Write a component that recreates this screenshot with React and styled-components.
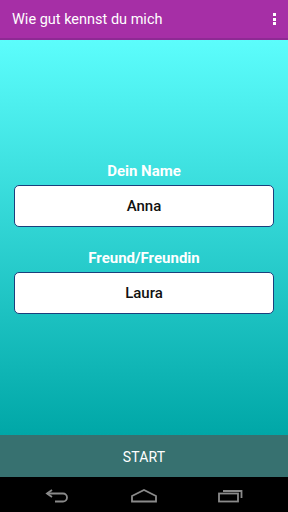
import styled, { createGlobalStyle } from 'styled-components';

const GlobalStyle = createGlobalStyle`
  html, body {
    margin: 0;
    padding: 0;
  }
  body {
    font-family: Roboto, "Noto Sans", sans-serif;
  }
`;

const Screen = styled.div`
  width: 288px;
  height: 512px;
  display: flex;
  flex-direction: column;
  overflow: hidden;
`;

const ActionBar = styled.header`
  height: 38px;
  flex-shrink: 0;
  background: #a62fa6;
  border-bottom: 2px solid #8e2a94;
  display: flex;
  align-items: center;
  justify-content: space-between;
  padding: 0 10px 0 12px;
`;

const Title = styled.h1`
  margin: 0;
  font-size: 14.5px;
  font-weight: 400;
  color: #ffffff;
`;

const MenuDots = styled.div`
  display: flex;
  flex-direction: column;
  gap: 1.5px;
  padding-right: 2px;

  span {
    width: 3px;
    height: 3px;
    background: #ffffff;
  }
`;

const Content = styled.main`
  flex: 1;
  background: linear-gradient(to bottom, #5cfdfc 0%, #00a7a7 100%);
  display: flex;
  flex-direction: column;
  padding: 122px 14px 0;
  gap: 22px;
`;

const Field = styled.div`
  display: flex;
  flex-direction: column;
  align-items: center;
  gap: 4px;
`;

const Label = styled.label`
  font-size: 15px;
  font-weight: 700;
  color: #ffffff;
  line-height: 19px;
`;

const InputBox = styled.input`
  box-sizing: border-box;
  width: 260px;
  height: 42px;
  border: 1.5px solid #1b3f7c;
  border-radius: 5px;
  background: #ffffff;
  text-align: center;
  font-family: Roboto, "Noto Sans", sans-serif;
  font-size: 15px;
  font-weight: 500;
  color: #111111;
  outline: none;
`;

const StartButton = styled.button`
  height: 42px;
  flex-shrink: 0;
  border: none;
  background: #377170;
  color: #ffffff;
  font-family: Roboto, "Noto Sans", sans-serif;
  font-size: 14px;
  letter-spacing: 0.2px;
  padding-top: 2px;
`;

const NavBar = styled.nav`
  height: 35px;
  flex-shrink: 0;
  background: #000000;
  display: flex;
  justify-content: space-between;
  align-items: center;
  padding: 0 43px;
`;

const NavIcon = styled.svg`
  width: 28px;
  height: 16px;
  stroke: #8a8a8a;
  fill: none;
  stroke-width: 1.8;
`;

const App = () => {
  return (
    <>
      <GlobalStyle />
      <Screen>
        <ActionBar>
          <Title>Wie gut kennst du mich</Title>
          <MenuDots>
            <span />
            <span />
            <span />
          </MenuDots>
        </ActionBar>
        <Content>
          <Field>
            <Label>Dein Name</Label>
            <InputBox defaultValue="Anna" />
          </Field>
          <Field>
            <Label>Freund/Freundin</Label>
            <InputBox defaultValue="Laura" />
          </Field>
        </Content>
        <StartButton>START</StartButton>
        <NavBar>
          <NavIcon viewBox="0 0 28 16">
            <path d="M9 3 L4 6.5 L9 10" />
            <path d="M4 6.5 H20 A4 4 0 0 1 20 14.5 H12" />
          </NavIcon>
          <NavIcon viewBox="0 0 28 16">
            <path d="M2 9 L14 3 L26 9 V14.5 H2 Z" />
          </NavIcon>
          <NavIcon viewBox="0 0 28 16">
            <rect x="2" y="6.5" width="19" height="8" />
            <path d="M6 4 H24.5 V11" />
          </NavIcon>
        </NavBar>
      </Screen>
    </>
  );
};

export default App;
